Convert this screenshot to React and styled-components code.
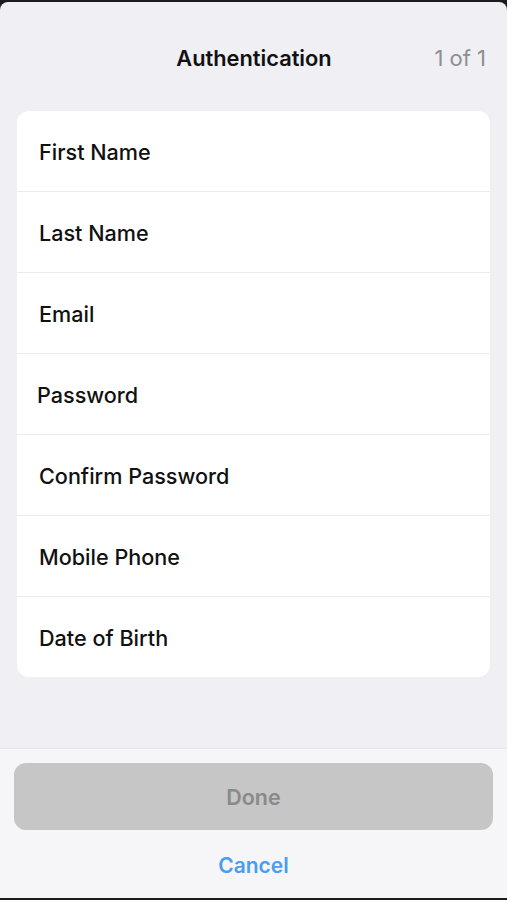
import React from "react";
import styled, { createGlobalStyle } from "styled-components";

const Global = createGlobalStyle`
  html, body { margin: 0; padding: 0; background: #1c1c1e; }
  body { font-family: Inter, "Noto Sans", "Liberation Sans", sans-serif; -webkit-font-smoothing: antialiased; }
  #root { padding-top: 2px; }
`;

const Sheet = styled.div`
  width: 507px;
  height: 896px;
  background: #efeff4;
  border-radius: 8px 8px 0 0;
  display: flex;
  flex-direction: column;
  overflow: hidden;
`;

const Header = styled.div`
  height: 109px;
  box-sizing: border-box;
  padding-top: 40px;
  position: relative;
  display: flex;
  justify-content: center;
  align-items: flex-start;
`;

const Title = styled.div`
  font-size: 21.8px;
  line-height: 32px;
  font-weight: 600;
  color: #111;
  padding-left: 1px;
`;

const Counter = styled.div`
  position: absolute;
  right: 21px;
  top: 40px;
  font-size: 22px;
  line-height: 32px;
  color: #8e8e93;
`;

const Main = styled.div`
  flex: 1;
  padding: 0 17px;
`;

const Card = styled.div`
  background: #fff;
  border-radius: 12px;
  overflow: hidden;
`;

const Row = styled.div`
  height: ${(p) => (p.$last ? 80 : 81)}px;
  display: flex;
  align-items: center;
  padding-left: ${(p) => p.$indent ?? 22}px;
  padding-top: 2px;
  box-sizing: border-box;
  font-size: 21.6px;
  color: #111;
  font-weight: 450;
  border-bottom: ${(p) => (p.$last ? "none" : "1px solid #ebebf0")};
`;

const Footer = styled.div`
  height: 150px;
  box-sizing: border-box;
  background: #f6f6f9;
  border-top: 1px solid #e6e6eb;
  padding: 14px 14px 0;
  display: flex;
  flex-direction: column;
  align-items: stretch;
`;

const DoneButton = styled.button`
  height: 67px;
  border: none;
  border-radius: 12px;
  background: #c6c6c6;
  color: #8a8a8a;
  font-family: inherit;
  font-size: 21.5px;
  font-weight: 600;
`;

const CancelButton = styled.button`
  margin-top: 21px;
  height: 28px;
  border: none;
  background: transparent;
  color: #4a9df0;
  font-family: inherit;
  font-size: 21px;
  font-weight: 600;
`;

const fields = [
  { label: "First Name" },
  { label: "Last Name" },
  { label: "Email" },
  { label: "Password", indent: 20 },
  { label: "Confirm Password" },
  { label: "Mobile Phone" },
  { label: "Date of Birth" },
];

export default function App() {
  return (
    <>
      <Global />
      <Sheet>
        <Header>
          <Title>Authentication</Title>
          <Counter>1 of 1</Counter>
        </Header>
        <Main>
          <Card>
            {fields.map((f, i) => (
              <Row key={f.label} $indent={f.indent} $last={i === fields.length - 1}>
                {f.label}
              </Row>
            ))}
          </Card>
        </Main>
        <Footer>
          <DoneButton>Done</DoneButton>
          <CancelButton>Cancel</CancelButton>
        </Footer>
      </Sheet>
    </>
  );
}
